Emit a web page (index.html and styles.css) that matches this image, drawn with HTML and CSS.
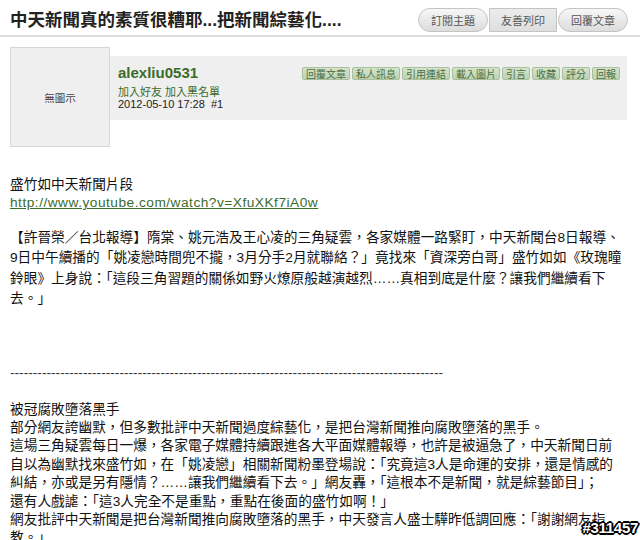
FILE: index.html
```html
<!DOCTYPE html>
<html lang="zh-Hant">
<head>
<meta charset="utf-8">
<title>中天新聞真的素質很糟耶...把新聞綜藝化....</title>
<link rel="stylesheet" href="styles.css">
</head>
<body>
<div class="page">
  <header class="topbar">
    <h1 class="title">中天新聞真的素質很糟耶...把新聞綜藝化....</h1>
    <div class="actions">
      <a class="btn pill">訂閱主題</a><a class="btn square">友善列印</a><a class="btn pill">回覆文章</a>
    </div>
  </header>

  <section class="post-head">
    <div class="avatar">無圖示</div>
    <div class="info">
      <div class="who">
        <div class="name">alexliu0531</div>
        <div class="links"><a>加入好友</a> <a>加入黑名單</a></div>
        <div class="date">2012-05-10 17:28 &nbsp;#1</div>
      </div>
      <div class="tools">
        <a class="tool">回覆文章</a><a class="tool">私人訊息</a><a class="tool">引用連結</a><a class="tool">載入圖片</a><a class="tool">引言</a><a class="tool">收藏</a><a class="tool">評分</a><a class="tool">回報</a>
      </div>
    </div>
  </section>

  <article class="content">
    <div class="intro">
      <div class="line">盛竹如中天新聞片段</div>
      <div class="line"><a class="url">http://www.youtube.com/watch?v=XfuXKf7iA0w</a></div>
    </div>
    <div class="para1">
      <div class="line">【許晉榮／台北報導】隋棠、姚元浩及王心凌的三角疑雲，各家媒體一路緊盯，中天新聞台8日報導、</div>
      <div class="line">9日中午續播的「姚凌戀時間兜不攏，3月分手2月就聯絡？」竟找來「資深旁白哥」盛竹如如《玫瑰瞳</div>
      <div class="line">鈴眼》上身說：「這段三角習題的關係如野火燎原般越演越烈……真相到底是什麼？讓我們繼續看下</div>
      <div class="line">去。」</div>
    </div>
    <div class="dashes">-----------------------------------------------------------------------------------------------</div>
    <div class="para2">
      <div class="line">被冠腐敗墮落黑手</div>
      <div class="line">部分網友誇幽默，但多數批評中天新聞過度綜藝化，是把台灣新聞推向腐敗墮落的黑手。</div>
      <div class="line">這場三角疑雲每日一爆，各家電子媒體持續跟進各大平面媒體報導，也許是被逼急了，中天新聞日前</div>
      <div class="line">自以為幽默找來盛竹如，在「姚凌戀」相關新聞粉墨登場說：「究竟這3人是命運的安排，還是情感的</div>
      <div class="line">糾結，亦或是另有隱情？……讓我們繼續看下去。」網友轟，「這根本不是新聞，就是綜藝節目」；</div>
      <div class="line">還有人戲謔：「這3人完全不是重點，重點在後面的盛竹如啊！」</div>
      <div class="line">網友批評中天新聞是把台灣新聞推向腐敗墮落的黑手，中天發言人盛士驊昨低調回應：「謝謝網友指</div>
      <div class="line">教。」</div>
    </div>
  </article>
</div>
<div class="watermark">#311457</div>
</body>
</html>
```

FILE: styles.css
```css
html, body {
  margin: 0;
  padding: 0;
  background: #ffffff;
  height: 540px;
  overflow: hidden;
}

body {
  font-family: "Liberation Sans", "Noto Sans CJK TC", sans-serif;
  color: #111;
  font-size: 13.7px;
}

.page {
  width: 640px;
}

/* ---------- top bar ---------- */
.topbar {
  display: flex;
  align-items: center;
  justify-content: space-between;
  padding: 8px 12px 3px 10px;
  margin: 0;
  border-bottom: 2px solid #dcdcdc;
  box-sizing: content-box;
  width: 618px;
}

.title {
  margin: 0;
  font-size: 17.5px;
  font-weight: bold;
  color: #222;
  line-height: 24px;
  white-space: nowrap;
}

.actions {
  display: flex;
  gap: 1px;
}

.btn {
  display: flex;
  align-items: center;
  justify-content: center;
  height: 22px;
  font-size: 11px;
  color: #555;
  border: 1px solid #c4c4c4;
  background: linear-gradient(#f7f7f7, #dcdcdc);
}

.btn.pill {
  width: 68px;
  border-radius: 12px;
}

.btn.square {
  width: 66px;
  background: linear-gradient(#ececec, #dedede);
  border-radius: 0;
}

/* ---------- post head ---------- */
.post-head {
  display: flex;
  align-items: flex-start;
  margin-top: 10px;
  padding-left: 10px;
}

.avatar {
  width: 98px;
  height: 98px;
  border: 1px solid #d6d6d6;
  background: #efefef;
  color: #444;
  font-size: 10.5px;
  display: flex;
  align-items: center;
  justify-content: center;
  flex: none;
}

.info {
  margin-top: 9px;
  width: 517px;
  height: 64px;
  background: #efefef;
  display: flex;
  justify-content: space-between;
  align-items: flex-start;
  padding: 0 7px 0 8px;
  box-sizing: border-box;
}

.who {
  padding-top: 8px;
}

.name {
  font-size: 15px;
  font-weight: bold;
  color: #3b6b2a;
  line-height: 17px;
  margin-bottom: 5px;
}

.links {
  font-size: 11px;
  line-height: 12px;
  color: #3b6b2a;
}

.date {
  font-size: 11px;
  line-height: 12px;
  color: #222;
}

.tools {
  display: flex;
  gap: 2px;
  margin-top: 11px;
}

.tool {
  display: flex;
  align-items: center;
  justify-content: center;
  height: 11px;
  padding: 0 3px;
  font-size: 10px;
  color: #4d6e45;
  background: linear-gradient(#d3e4cb, #bcd3b2);
  border: 1px solid #a8c09e;
  border-radius: 2px;
  white-space: nowrap;
}

/* ---------- content ---------- */
.content {
  padding-left: 10px;
  margin-top: 29px;
  white-space: nowrap;
}

.intro {
  line-height: 18px;
}

.url {
  color: #3c6b2c;
  text-decoration: underline;
  letter-spacing: 0.5px;
}

.para1 {
  margin-top: 16px;
  line-height: 20.4px;
}

.dashes {
  margin-top: 54px;
  line-height: 18px;
  color: #333;
}

.para2 {
  margin-top: 19px;
  line-height: 18.4px;
}

/* ---------- watermark overlay ---------- */
.watermark {
  position: absolute;
  right: 2px;
  top: 519px;
  font-family: "Liberation Sans", sans-serif;
  font-weight: bold;
  font-size: 15px;
  line-height: 18px;
  color: #fff;
  letter-spacing: -0.3px;
  text-shadow:
    1px 0 0 #000, -1px 0 0 #000, 0 1px 0 #000, 0 -1px 0 #000,
    1px 1px 0 #000, -1px -1px 0 #000, 1px -1px 0 #000, -1px 1px 0 #000,
    2px 0 0 #000, -2px 0 0 #000, 0 2px 0 #000, 0 -2px 0 #000;
}
```
